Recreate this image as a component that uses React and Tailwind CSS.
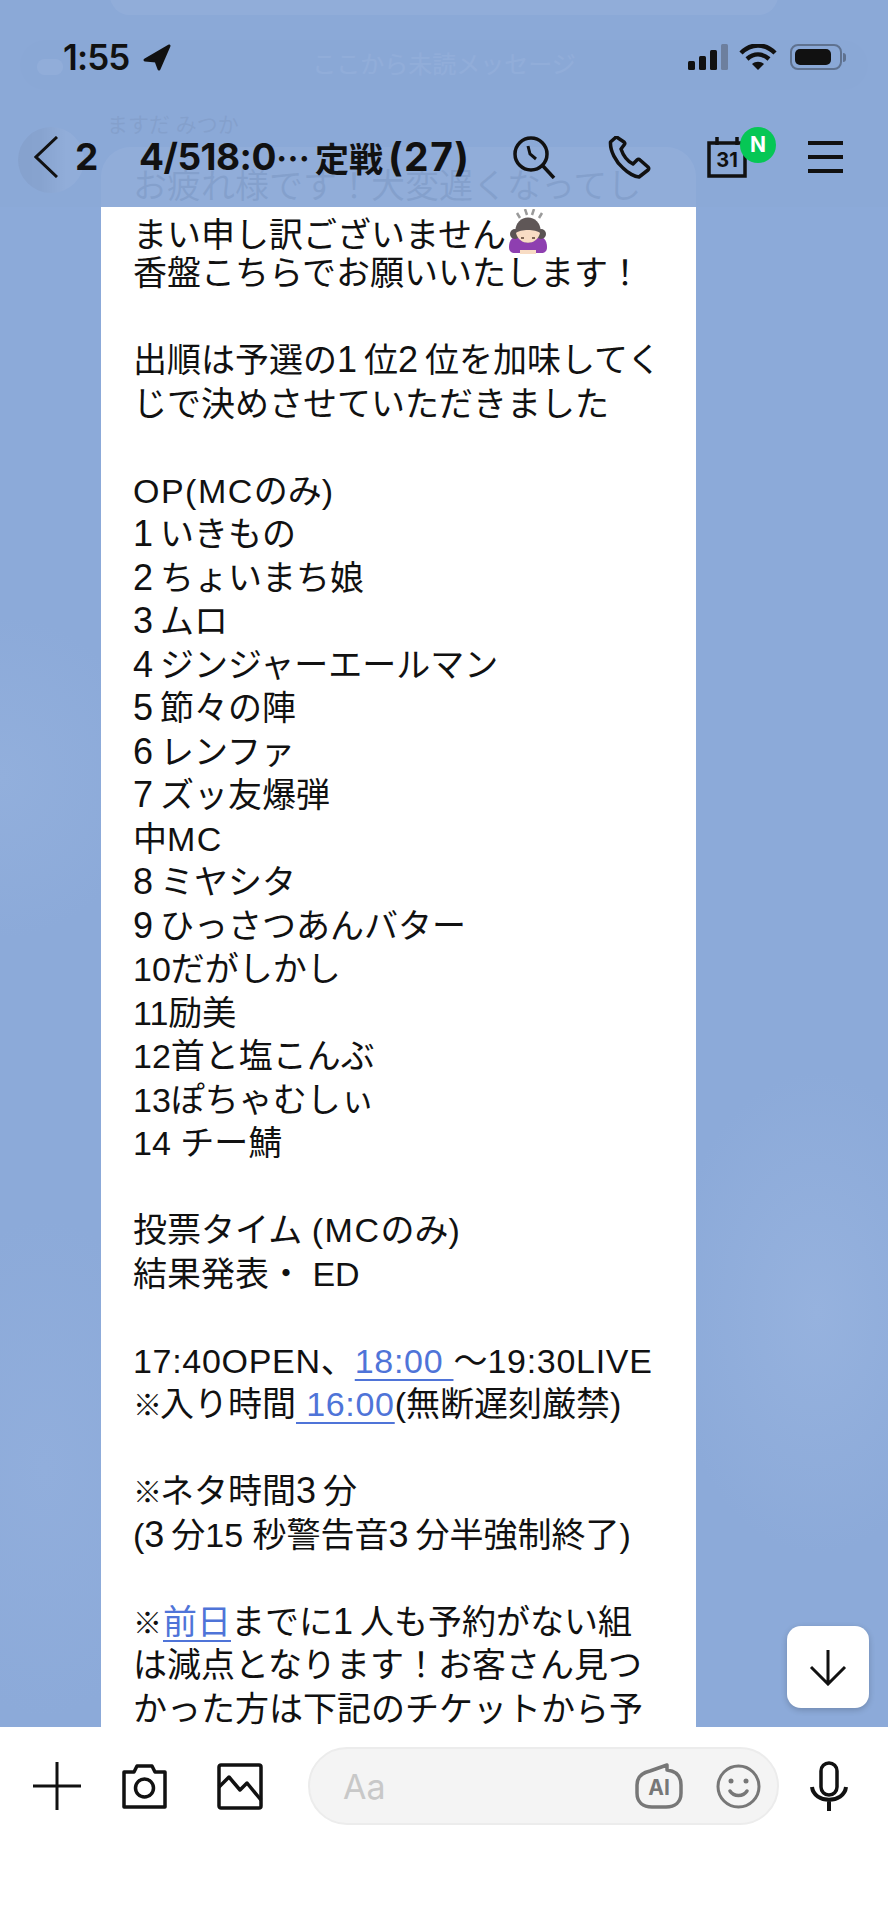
import React from 'react'

const Link = ({ children }) => (
  <span className="text-[#4f74d8] underline decoration-2 underline-offset-[6px]">{children}</span>
)

// digits in the reference are full-size but narrower than a full-width cell
const Num = ({ children }) => <span className="inline-block w-[27px] text-[36px] leading-[36px]">{children}</span>

const Mark = ({ w = 'w-[27px]' }) => (
  <span className={`inline-block ${w} text-[29px] font-bold leading-[30px]`}>※</span>
)

const Wide = ({ children }) => <span className="tracking-[1.5px]">{children}</span>
const Time = ({ children }) => <span className="tracking-[0.7px]">{children}</span>

const lines = [
  'お疲れ様です！大変遅くなってし',
  <>まい申し訳ございません<BowEmoji /></>,
  '香盤こちらでお願いいたします！',
  '',
  <>出順は予選の<Num>1</Num>位<Num>2</Num>位を加味してく</>,
  'じで決めさせていただきました',
  '',
  <><Wide>OP(MC</Wide>のみ)</>,
  <><Num>1</Num>いきもの</>,
  <><Num>2</Num>ちょいまち娘</>,
  <><Num>3</Num>ムロ</>,
  <><Num>4</Num>ジンジャーエールマン</>,
  <><Num>5</Num>節々の陣</>,
  <><Num>6</Num>レンファ</>,
  <><Num>7</Num>ズッ友爆弾</>,
  <>中<Wide>MC</Wide></>,
  <><Num>8</Num>ミヤシタ</>,
  <><Num>9</Num>ひっさつあんバター</>,
  '10だがしかし',
  '11励美',
  '12首と塩こんぶ',
  '13ぽちゃむしぃ',
  '14 チー鯖',
  '',
  <>投票タイム <Wide>(MC</Wide>のみ)</>,
  '結果発表・ ED',
  '',
  <><Time>17:40OPEN</Time>、<Time><Link>18:00 </Link></Time>～<Time>19:30LIVE</Time></>,
  <><Mark />入り時間<Time><Link> 16:00</Link></Time>(無断遅刻厳禁)</>,
  '',
  <><Mark />ネタ時間<Num>3</Num>分</>,
  <>(<Num>3</Num>分15 秒警告音<Num>3</Num>分半強制終了)</>,
  '',
  <><Mark w="w-[30px]" /><Link>前日</Link>までに<Num>1</Num>人も予約がない組</>,
  'は減点となります！お客さん見つ',
  'かった方は下記のチケットから予',
]

function BowEmoji() {
  return (
    <svg className="inline-block align-[-8px]" width="44" height="46" viewBox="0 0 44 46">
      <path d="M11 4l3 5M19 0l2 6M28 0l-2 6M36 4l-3 5" stroke="#9a9a9a" strokeWidth="2.5" />
      <path d="M3 38c0-7 4-11 9-11h20c5 0 9 4 9 11 0 4-2 6-6 6H9c-4 0-6-2-6-6z" fill="#8e3fb0" />
      <circle cx="9" cy="25" r="5" fill="#5a5353" />
      <circle cx="35" cy="25" r="5" fill="#5a5353" />
      <circle cx="22" cy="21" r="12.500" fill="#5f5757" />
      <path d="M10 24c3 13 21 13 24 0-4-4-20-4-24 0z" fill="#f8dcc4" />
      <path d="M14 41h16v4H14z" fill="#f8dcc4" />
      <path d="M15 29h3M26 29h3" stroke="#5a4030" strokeWidth="1.5" />
    </svg>
  )
}

const App = () => {
  return (
    <div className="relative flex h-[1920px] w-[888px] flex-col overflow-hidden bg-white font-['Liberation_Sans','Noto_Sans_CJK_JP',sans-serif] text-[#111]">
      {/* Chat area */}
      <div className="h-[1727px] shrink-0 overflow-hidden bg-[#8caad9] bg-[radial-gradient(ellipse_at_92%_76%,#96b2de_0%,transparent_13%),radial-gradient(ellipse_at_0%_45%,#92afdc_0%,transparent_12%),radial-gradient(ellipse_at_5%_85%,#91aedc_0%,transparent_12%)]">
        <div className="mx-[110px] -mt-[25px] h-[40px] rounded-[20px] bg-white" />
        <div className="relative mx-5 mt-[25px] flex h-[50px] items-center justify-center rounded-[25px] bg-black/10 text-[24px] text-white">
          <span className="absolute left-[17px] top-[19px] h-[16px] w-[26px] rounded-full bg-white" />
          ここから未読メッセージ
        </div>
        <div className="mt-[23px] flex">
          <div className="ml-[18px] mt-[14px] h-[66px] w-[66px] shrink-0 rounded-full bg-[linear-gradient(90deg,#222_0%,#444_35%,#fff_75%)]" />
          <div className="ml-[17px]">
            <div className="ml-[6px] h-[24px] text-[21px] leading-[24px] text-black">ますだ みつか</div>
            <div className="mt-[10px] w-[595px] rounded-t-[30px] bg-white pb-10 pl-[32px] pt-[18px] text-[34px] leading-[43.5px]">
              {lines.map((line, i) => (
                <div key={i} className="h-[43.5px] whitespace-pre">{line}</div>
              ))}
            </div>
          </div>
        </div>
      </div>

      {/* Status bar + nav, translucent over the messages */}
      <div className="absolute inset-x-0 top-0 h-[207px] bg-[#8ba9d7]/95">
        <div className="flex h-[36px] translate-y-[39px] items-center pl-[63px] pr-[42px]">
          <span className="w-[71px] whitespace-nowrap font-['Inter'] text-[35px] font-semibold tracking-tight">1:55</span>
          <svg className="ml-[8px]" width="30" height="29" viewBox="0 0 30 29">
            <path d="M27 3L3 17l11 1 3 8z" fill="#111" stroke="#111" strokeWidth="3" strokeLinejoin="round" />
          </svg>
          <svg className="ml-auto" width="40" height="26" viewBox="0 0 40 26">
            <rect x="0" y="17" width="7" height="9" rx="1.5" fill="#111" />
            <rect x="11" y="12" width="7" height="14" rx="1.5" fill="#111" />
            <rect x="22" y="6" width="7" height="20" rx="1.5" fill="#111" />
            <rect x="33" y="0" width="7" height="26" rx="1.5" fill="#6d7f9e" />
          </svg>
          <svg className="ml-[11px]" width="38" height="26" viewBox="0 0 38 26">
            <path d="M2 9c10-10 24-10 34 0" stroke="#111" strokeWidth="4.5" fill="none" />
            <path d="M8 15c7-6 15-6 22 0" stroke="#111" strokeWidth="4.5" fill="none" />
            <path d="M19 26l-6-6c3.500-3 8.500-3 12 0z" fill="#111" />
          </svg>
          <div className="ml-[13px] flex items-center">
            <div className="flex h-[26px] w-[52px] items-center rounded-[8px] border-2 border-[#5f7290] p-[3px]">
              <div className="h-full w-[36px] rounded-[5px] bg-[#111]" />
            </div>
            <div className="ml-[1px] h-[9px] w-[3px] rounded-r-full bg-[#5f7290]" />
          </div>
        </div>

        <div className="flex h-[50px] translate-y-[96px] items-center">
          <svg className="ml-[34px] shrink-0" width="24" height="42" viewBox="0 0 24 42" fill="none" stroke="#111" strokeWidth="3">
            <path d="M23 1L2 21l21 20" />
          </svg>
          <span className="ml-[17px] w-[24px] font-['Inter'] text-[37px] font-bold">2</span>
          <span className="ml-[40px] flex w-[339px] items-center whitespace-nowrap text-[34px] font-bold">
            <span className="font-['Inter'] text-[37px] tracking-[-0.5px]">4/518:0</span>
            <span className="font-['Noto_Sans_CJK_JP']">…</span>
            <span className="ml-[5px] font-['Noto_Sans_CJK_JP']">定戦</span>
            <span className="ml-[5px] font-['Inter'] text-[39px] tracking-[1.5px]">(27)</span>
          </span>
          <svg className="ml-[35px] shrink-0" width="43" height="43" viewBox="0 0 43 43" fill="none" stroke="#111" strokeWidth="3.5">
            <circle cx="18" cy="18" r="16" />
            <path d="M30 30l11 12" />
            <path d="M15 10l2 8 6 5" strokeWidth="3" />
          </svg>
          <svg className="ml-[52px] shrink-0" width="43" height="43" viewBox="0 0 43 43" fill="none" stroke="#111" strokeWidth="3.5" strokeLinejoin="round">
            <path d="M7 2L2.500 6C2 15 8 26 15 32C20 37 27 41 31 41L40 34C41 33 41 32 40 31L32 24C31 23 30 23 29 24L25 28C19 25 15 19 13 13L16 9C17 8 17 7 16 6L10 2C9 1 8 1 7 2Z" />
          </svg>
          <div className="relative ml-[56px] h-[42px] w-[40px] shrink-0">
            <svg width="40" height="42" viewBox="0 0 40 42" fill="none" stroke="#111" strokeWidth="3.500">
              <path d="M2 7h36v33H2zM10 1v8M30 1v8" />
            </svg>
            <span className="absolute inset-x-0 top-[12px] text-center font-['Inter'] text-[20px] font-bold leading-[24px]">31</span>
            <span className="absolute -right-[29px] -top-[9px] flex h-[36px] w-[36px] items-center justify-center rounded-full bg-[#06c755] font-['Inter'] text-[21px] font-bold text-white">N</span>
          </div>
          <div className="ml-[61px] flex w-[35px] shrink-0 flex-col gap-[10px]">
            <div className="h-[4px] bg-[#111]" />
            <div className="h-[4px] bg-[#111]" />
            <div className="h-[4px] bg-[#111]" />
          </div>
        </div>
      </div>

      {/* Scroll to bottom */}
      <div className="absolute left-[787px] top-[1626px] flex h-[82px] w-[82px] items-center justify-center rounded-[14px] bg-white shadow-[0_2px_6px_rgba(0,0,0,0.2)]">
        <svg width="38" height="38" viewBox="0 0 38 38" fill="none" stroke="#111" strokeWidth="3">
          <path d="M19 2v34M2 19l17 17 17-17" />
        </svg>
      </div>

      {/* Input bar */}
      <div className="flex h-[98px] shrink-0 items-center pl-[33px] pt-[20px]">
        <svg className="shrink-0" width="48" height="48" viewBox="0 0 48 48" stroke="#111" strokeWidth="3">
          <path d="M0 24h48M24 0v48" />
        </svg>
        <svg className="ml-[40px] shrink-0" width="47" height="47" viewBox="0 0 47 47" fill="none" stroke="#111" strokeWidth="3.5" strokeLinejoin="round">
          <path d="M3 9h10l3-6h15l3 6h10v35H3z" />
          <circle cx="23.500" cy="25" r="9" />
        </svg>
        <svg className="ml-[49px] shrink-0" width="46" height="47" viewBox="0 0 46 47" fill="none" stroke="#111" strokeWidth="3.5" strokeLinejoin="round">
          <rect x="2" y="2" width="42" height="43" rx="2" />
          <path d="M2 24l10-10 11 13 7-7 14 17" />
        </svg>
        <div className="ml-[45px] flex h-[78px] w-[471px] shrink-0 items-center rounded-[39px] border-2 border-[#ececec] bg-[#f4f4f4] pl-[33px]">
          <span className="font-['Inter'] text-[34px] text-[#c8c8c8]">Aa</span>
          <div className="relative ml-auto h-[46px] w-[48px] shrink-0">
            <svg width="48" height="46" viewBox="0 0 48 46" fill="none" stroke="#777" strokeWidth="3.5" strokeLinejoin="round">
              <path d="M32 7C41 8 46 13 46 22V30C46 39 40 44 31 44H17C8 44 2 39 2 30V22C2 15 6 10 15 8L32 2Z" />
            </svg>
            <span className="absolute inset-x-0 top-[12px] text-center font-['Inter'] text-[21px] font-bold leading-[26px] text-[#777]">AI</span>
          </div>
          <svg className="ml-[33px] mr-[16px] shrink-0" width="45" height="45" viewBox="0 0 45 45" fill="none" stroke="#777" strokeWidth="3">
            <circle cx="22.500" cy="22.500" r="20.500" />
            <path d="M14 27c4 6 13 6 17 0" strokeWidth="3.500" strokeLinecap="round" />
            <circle cx="15" cy="17" r="2.500" fill="#777" stroke="none" />
            <circle cx="30" cy="17" r="2.500" fill="#777" stroke="none" />
          </svg>
        </div>
        <svg className="ml-[31px] shrink-0" width="38" height="50" viewBox="0 0 38 50" fill="none" stroke="#111" strokeWidth="3.5">
          <rect x="11" y="2" width="16" height="32" rx="8" />
          <path d="M2 26c2 17 32 17 34 0M19 39v11" strokeWidth="4" />
        </svg>
      </div>
    </div>
  )
}

export default App
